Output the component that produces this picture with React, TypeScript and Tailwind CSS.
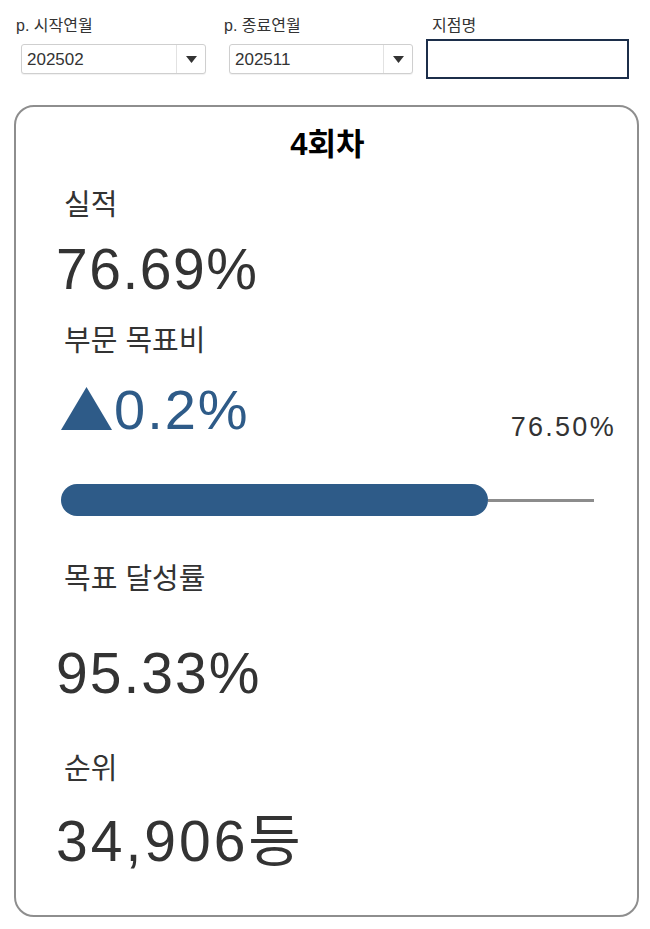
import React from "react";

const font = "font-['Liberation_Sans','Noto_Sans_CJK_KR',sans-serif]";

function Caret() {
  return (
    <svg width="11" height="7" viewBox="0 0 11 7" className="block">
      <path d="M0 0 L11 0 L5.5 7 Z" fill="#333333" />
    </svg>
  );
}

function SelectBox({ value, width }: { value: string; width: string }) {
  return (
    <div
      className={`${width} h-[30px] flex items-stretch rounded-[3px] border border-[#cfcfcf] bg-white shadow-[0_1px_1px_rgba(0,0,0,0.06)]`}
    >
      <div className="flex-1 flex items-center pl-[5px] text-[17px] leading-none text-[#333]">{value}</div>
      <div className="w-[29px] border-l border-[#e2e2e2] flex items-center justify-center">
        <Caret />
      </div>
    </div>
  );
}

function Label({ children }: { children: React.ReactNode }) {
  return <div className="text-[29px] leading-none text-[#333] pl-[48px]">{children}</div>;
}

function BigValue({ children, className = "" }: { children: React.ReactNode; className?: string }) {
  return <div className={`text-[57px] leading-none text-[#333] pl-[40px] ${className}`}>{children}</div>;
}

export default function App() {
  return (
    <div className={`${font} bg-white w-[650px] h-[929px] text-[#333]`}>
      {/* parameter controls */}
      <div className="flex pt-[18px] pl-[15px] h-[105px]">
        <div className="w-[209px]">
          <div className="text-[16px] leading-none pl-[1px]">p. 시작연월</div>
          <div className="mt-[10px] ml-[6px]">
            <SelectBox value="202502" width="w-[185px]" />
          </div>
        </div>
        <div className="w-[202px]">
          <div className="text-[16px] leading-none">p. 종료연월</div>
          <div className="mt-[10px] ml-[5px]">
            <SelectBox value="202511" width="w-[184px]" />
          </div>
        </div>
        <div>
          <div className="text-[16px] leading-none pl-[6px]">지점명</div>
          <div className="mt-[5px] w-[203px] h-[40px] border-2 border-[#1c2e4a] bg-white" />
        </div>
      </div>

      {/* summary card */}
      <div className="ml-[14px] w-[625px] h-[812px] rounded-[20px] border-2 border-[#8e8e8e] pt-[22px] pr-[21px]">
        <div className="text-center text-[31px] font-bold leading-none text-black pl-[23px]">4회차</div>

        <div className="mt-[31px]">
          <Label>실적</Label>
        </div>
        <BigValue className="mt-[21px] tracking-[1.5px]">76.69%</BigValue>

        <div className="mt-[29px]">
          <Label>부문 목표비</Label>
        </div>

        <div className="mt-[26px] flex items-start justify-between">
          <div className="flex items-start pl-[45px] text-[#2e5b88]">
            <svg width="51" height="43" viewBox="0 0 51 43" className="mt-[5px] block">
              <path d="M25.5 0 L51 43 L0 43 Z" fill="#2e5b88" />
            </svg>
            <div className="text-[56px] leading-none tracking-[2px] ml-[2px]">0.2%</div>
          </div>
          <div className="text-[27px] leading-none tracking-[2.3px] mt-[32px]">76.50%</div>
        </div>

        {/* progress bar against target */}
        <div className="mt-[43px] pl-[45px] flex items-center h-[32px]">
          <div className="w-[427px] h-[32px] rounded-full bg-[#2e5b88]" />
          <div className="w-[106px] h-[3px] bg-[#8c8c8c]" />
        </div>

        <div className="mt-[49px]">
          <Label>목표 달성률</Label>
        </div>
        <BigValue className="mt-[51px] tracking-[2px]">95.33%</BigValue>

        <div className="mt-[53px]">
          <Label>순위</Label>
        </div>
        <BigValue className="mt-[29px] tracking-[3px]">34,906등</BigValue>
      </div>
    </div>
  );
}
